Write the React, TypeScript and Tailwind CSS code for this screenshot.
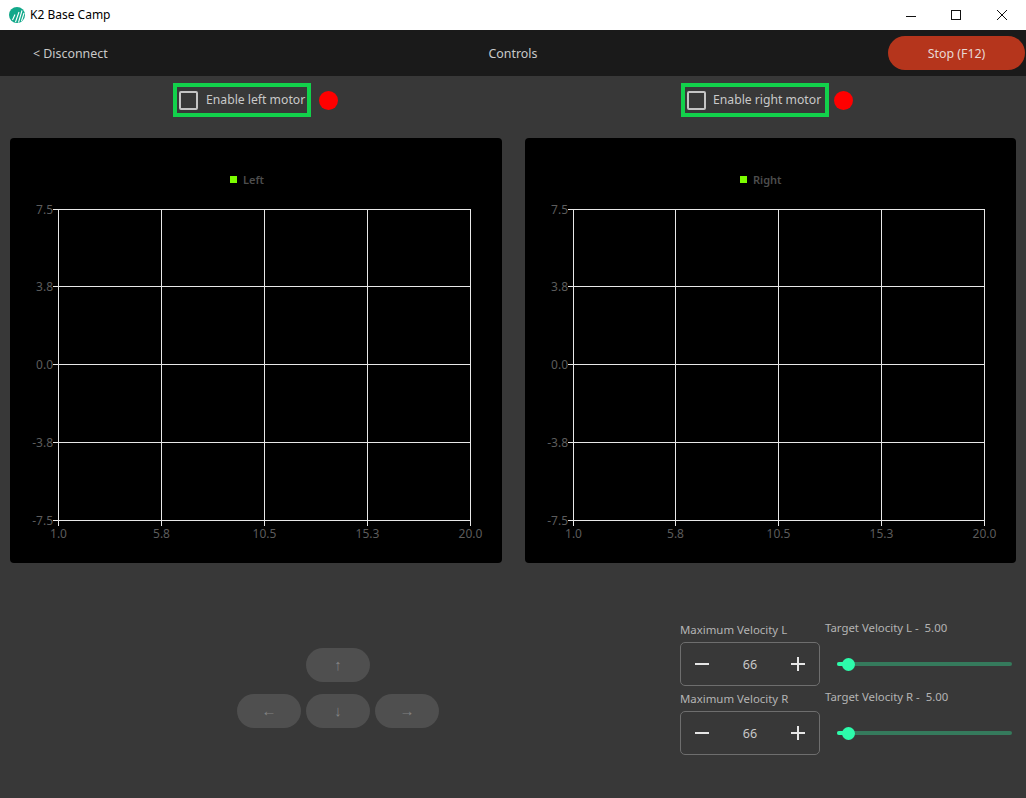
import React from "react";

const font = { fontFamily: '"Noto Sans", "Open Sans", sans-serif' };

function Chart({ name, legendX, textX, xs, w }: { name: string; legendX: number; textX: number; xs: number[]; w: string }) {
  const ys = [71.5, 148.5, 226.5, 304.5, 382.5];
  const xl = ["1.0", "5.8", "10.5", "15.3", "20.0"];
  const yl = ["7.5", "3.8", "0.0", "-3.8", "-7.5"];
  const right = xs[4];
  return (
    <div className={`h-[425px] rounded bg-black ${w}`}>
      <svg width="100%" height="425" className="block" style={{ fontFamily: '"Noto Sans", sans-serif' }}>
        <rect x={legendX} y={38} width={7} height={7} fill="#7cfc00" />
        <text x={textX} y={45.5} fontSize="11" fill="#4d4d4d" fontWeight="600">{name}</text>
        {xs.map((x, i) => (
          <g key={x}>
            <line x1={x + 0.5} x2={x + 0.5} y1={71} y2={388} stroke="#e8e8e8" strokeWidth="1" />
            <text x={x + 0.5} y={399.5} fontSize="12" fill="#5c5c5c" textAnchor="middle">{xl[i]}</text>
          </g>
        ))}
        {ys.map((y, i) => (
          <g key={y}>
            <line x1={43} x2={right} y1={y} y2={y} stroke="#e8e8e8" strokeWidth="1" />
            <text x={43} y={y + 4.5} fontSize="12" fill="#5c5c5c" textAnchor="end">{yl[i]}</text>
          </g>
        ))}
      </svg>
    </div>
  );
}

function Enable({ label, w, gap }: { label: string; w: string; gap: string }) {
  return (
    <div className={`flex h-[34px] items-center border-[4px] border-[#12d14b] pl-[2px] ${w}`}>
      <span className="h-[19px] w-[19px] shrink-0 rounded-[2px] border-2 border-[#c4c4c4]" />
      <span className={`mt-[1px] whitespace-nowrap text-[12.2px] text-[#c9c9c9] ${gap}`}>{label}</span>
    </div>
  );
}

function Stepper() {
  return (
    <div className="flex h-[44px] w-[140px] items-center justify-between rounded-[5px] border border-[#6e6e6e] px-[13px]">
      <svg width="16" height="16" viewBox="0 0 16 16"><path d="M1 8h14" stroke="#e6e6e6" strokeWidth="2" /></svg>
      <span className="mt-[3px] text-[12.5px] text-[#c9c9c9]">66</span>
      <svg width="16" height="16" viewBox="0 0 16 16"><path d="M1 8h14M8 1v14" stroke="#e6e6e6" strokeWidth="2" /></svg>
    </div>
  );
}

function Slider() {
  return (
    <div className="relative ml-[12px] h-[4px] w-[175px] rounded-full bg-[#357a5c]">
      <div className="absolute left-0 top-0 h-[4px] w-[11px] rounded-full bg-[#2dfcab]" />
      <div className="absolute left-[5px] top-[-4.5px] h-[13px] w-[13px] rounded-full bg-[#2dfcab]" />
    </div>
  );
}

function Dir({ c }: { c: string }) {
  return (
    <div className="flex h-[34px] w-[64px] items-center justify-center rounded-full bg-[#4f4f4f] pb-[2px] text-[15px] font-medium text-[#828282]">
      {c}
    </div>
  );
}

export default function App() {
  return (
    <div className="flex h-[798px] w-[1026px] flex-col overflow-hidden bg-[#383838]" style={font}>
      <div className="flex h-[30px] shrink-0 items-center bg-white pl-[9px] text-black">
        <svg width="16" height="16" viewBox="0 0 16 16">
          <circle cx="8" cy="8" r="8" fill="#12a88a" />
          <path d="M3.5 13 6 7.5M6.5 15 10 5M9.5 15.5 13 3.5M12.5 14 15 6" stroke="#fff" strokeWidth="1.1" />
        </svg>
        <span className="ml-[5px] text-[12px]">K2 Base Camp</span>
        <div className="ml-auto flex items-center">
          <svg width="12" height="12" viewBox="0 0 12 12" className="mr-[33px]"><path d="M1 7.5h10" stroke="#111" /></svg>
          <svg width="12" height="12" viewBox="0 0 12 12" className="mr-[34px]"><rect x="1.5" y="1.5" width="9" height="9" fill="none" stroke="#111" /></svg>
          <svg width="12" height="12" viewBox="0 0 12 12" className="mr-[18px]"><path d="M1 1l10 10M11 1 1 11" stroke="#111" /></svg>
        </div>
      </div>

      <div className="relative flex h-[46px] shrink-0 items-center justify-center bg-[#1a1a1a] pt-[2px] text-[12.4px] text-[#c9c9c9]">
        <span className="absolute left-[33px] top-[15px]">&lt; Disconnect</span>
        <span>Controls</span>
        <div className="absolute left-[888px] top-[6px] flex h-[34px] w-[137px] items-center justify-center rounded-full bg-[#b5351c] pt-[2px] text-[#e8d8d4]">
          Stop (F12)
        </div>
      </div>

      <div className="flex h-[62px] shrink-0 pt-[7px]">
        <div className="flex w-[515px] items-start pl-[173px]">
          <Enable label="Enable left motor" w="w-[138px]" gap="ml-[8px]" />
          <span className="ml-[8px] mt-[7.5px] h-[19px] w-[19px] rounded-full bg-[#ff0000]" />
        </div>
        <div className="flex items-start pl-[166px]">
          <Enable label="Enable right motor" w="w-[148px]" gap="ml-[7px]" />
          <span className="ml-[5px] mt-[7.5px] h-[19px] w-[19px] rounded-full bg-[#ff0000]" />
        </div>
      </div>

      <div className="flex shrink-0 gap-[23px] pl-[10px]">
        <Chart name="Left" legendX={220} textX={233} xs={[48, 151, 254, 357, 460]} w="w-[492px]" />
        <Chart name="Right" legendX={215} textX={228} xs={[48, 150, 253, 356, 459]} w="w-[491px]" />
      </div>

      <div className="flex flex-1">
        <div className="flex w-[680px] flex-col items-center pt-[85px]">
          <div className="ml-[-4px] flex flex-col items-center gap-[12px]">
            <Dir c="↑" />
            <div className="flex gap-[5px]">
              <Dir c="←" />
              <Dir c="↓" />
              <Dir c="→" />
            </div>
          </div>
        </div>
        <div className="flex flex-col pt-[58px]">
          {["L", "R"].map((s) => (
            <div key={s} className="flex h-[69px]">
              <div className="w-[145px]">
                <div className="mb-[3px] h-[18px] text-[11.4px] leading-[18px] text-[#b4b4b4]">Maximum Velocity {s}</div>
                <Stepper />
              </div>
              <div className="flex w-[200px] flex-col">
                <div className="mt-[-2px] h-[18px] whitespace-pre text-[11.4px] leading-[18px] text-[#b4b4b4]">Target Velocity {s} -  5.00</div>
                <div className="mt-[25px]"><Slider /></div>
              </div>
            </div>
          ))}
        </div>
      </div>
    </div>
  );
}
